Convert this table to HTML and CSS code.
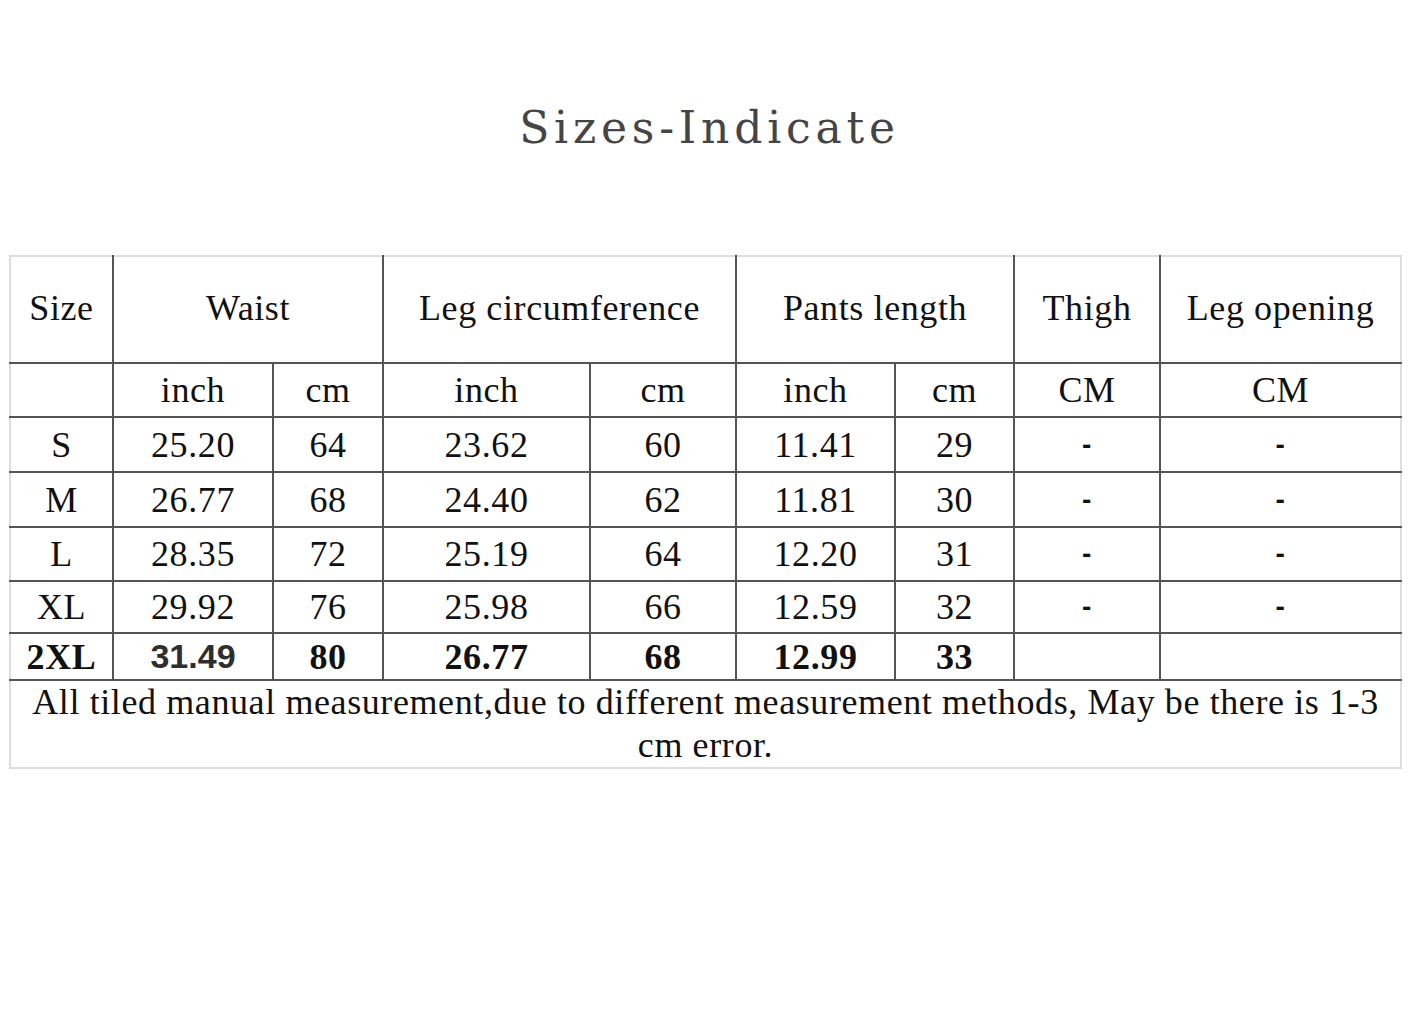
FILE: index.html
```html
<!DOCTYPE html>
<html>
<head>
<meta charset="utf-8">
<link rel="stylesheet" href="styles.css">
</head>
<body>
<h1 class="title">Sizes-Indicate</h1>
<table class="chart">
  <colgroup>
    <col style="width:103px"><col style="width:160px"><col style="width:110px">
    <col style="width:207px"><col style="width:146px"><col style="width:159px">
    <col style="width:119px"><col style="width:146px"><col style="width:241px">
  </colgroup>
  <tr class="r-head">
    <td>Size</td>
    <td colspan="2">Waist</td>
    <td colspan="2">Leg circumference</td>
    <td colspan="2">Pants length</td>
    <td>Thigh</td>
    <td>Leg opening</td>
  </tr>
  <tr class="r-unit">
    <td></td><td>inch</td><td>cm</td><td>inch</td><td>cm</td><td>inch</td><td>cm</td><td>CM</td><td>CM</td>
  </tr>
  <tr class="r-s">
    <td>S</td><td>25.20</td><td>64</td><td>23.62</td><td>60</td><td>11.41</td><td>29</td><td class="dash">-</td><td class="dash">-</td>
  </tr>
  <tr class="r-m">
    <td>M</td><td>26.77</td><td>68</td><td>24.40</td><td>62</td><td>11.81</td><td>30</td><td class="dash">-</td><td class="dash">-</td>
  </tr>
  <tr class="r-l">
    <td>L</td><td>28.35</td><td>72</td><td>25.19</td><td>64</td><td>12.20</td><td>31</td><td class="dash">-</td><td class="dash">-</td>
  </tr>
  <tr class="r-xl">
    <td>XL</td><td>29.92</td><td>76</td><td>25.98</td><td>66</td><td>12.59</td><td>32</td><td class="dash">-</td><td class="dash">-</td>
  </tr>
  <tr class="r-bold">
    <td>2XL</td><td class="sans">31.49</td><td>80</td><td>26.77</td><td>68</td><td>12.99</td><td>33</td><td></td><td></td>
  </tr>
  <tr class="r-note">
    <td colspan="9">All tiled manual measurement,due to different measurement methods, May be there is 1-3 cm error.</td>
  </tr>
</table>
</body>
</html>
```
FILE: styles.css
```css
html, body {
  margin: 0;
  padding: 0;
  background: #ffffff;
}
body {
  width: 1410px;
  height: 1020px;
  overflow: hidden;
}
.title {
  margin: 0;
  padding-top: 100px;
  padding-left: 9px;
  height: 255px;
  box-sizing: border-box;
  text-align: center;
  font-family: "DejaVu Serif", serif;
  font-weight: normal;
  font-size: 44px;
  line-height: 56px;
  letter-spacing: 4.8px;
  color: #454545;
}
.chart {
  margin-left: 9px;
  width: 1391px;
  table-layout: fixed;
  border-collapse: collapse;
  border: 2px solid #dedede;
  font-family: "Liberation Serif", "Times New Roman", serif;
  font-size: 36px;
  letter-spacing: 0.6px;
  color: #111111;
}
.chart td {
  border: 2px solid #555555;
  text-align: center;
  vertical-align: middle;
  padding: 0;
  white-space: nowrap;
}
.chart tr:first-child td { border-top: none; }
.chart td:first-child { border-left: none; }
.chart td:last-child { border-right: none; }
.r-head td { height: 101px; padding-bottom: 4px; }
.r-unit td { height: 52px; }
.r-s td, .r-m td { height: 53px; }
.r-l td { height: 52px; }
.r-xl td { height: 50px; }
.r-bold td { height: 45px; font-weight: bold; }
.r-bold td.sans {
  font-family: "Liberation Sans", Arial, sans-serif;
  font-size: 34px;
  letter-spacing: 0;
  color: #2e2e2e;
}
.chart td.dash {
  font-family: "Liberation Sans", Arial, sans-serif;
  font-weight: bold;
  font-size: 28px;
}
.r-note td {
  border-bottom: none;
  white-space: normal;
  line-height: 43px;
  height: 80px;
  vertical-align: top;
  padding: 0 20px;
}
```
